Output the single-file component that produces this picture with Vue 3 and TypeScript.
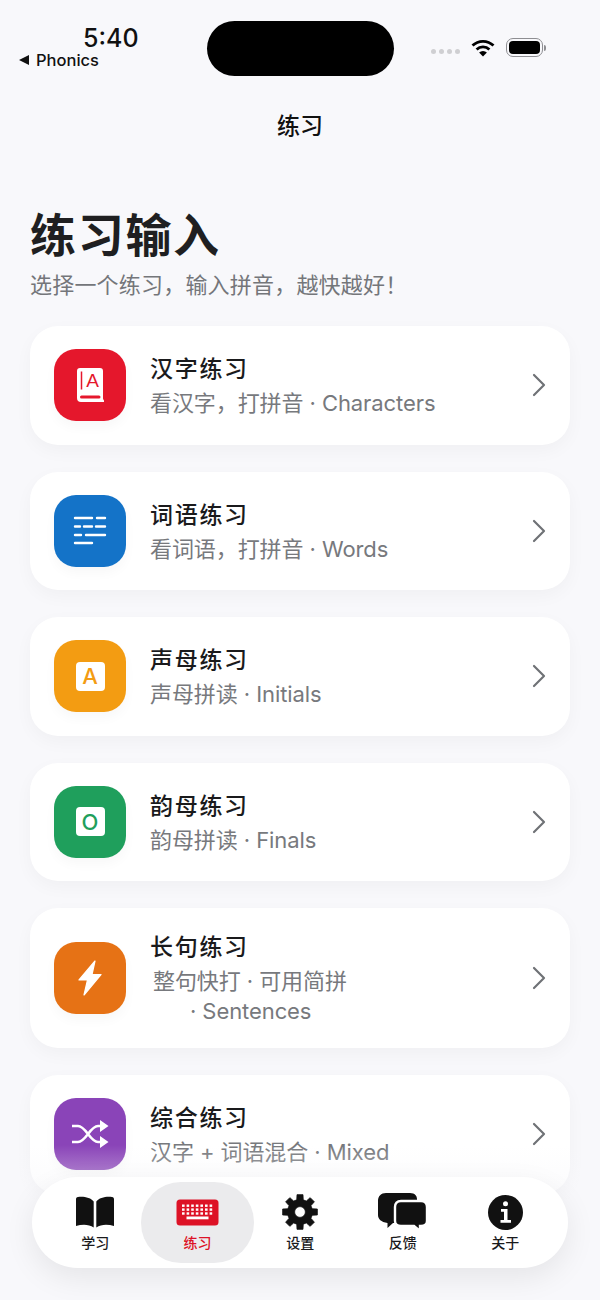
<script setup lang="ts">
interface Exercise {
  title: string
  sub: string
  sub2?: string
  color: string
  icon: 'book' | 'lines' | 'a' | 'o' | 'bolt' | 'shuffle'
}

const exercises: Exercise[] = [
  { title: '汉字练习', sub: '看汉字，打拼音 · Characters', color: '#e5172c', icon: 'book' },
  { title: '词语练习', sub: '看词语，打拼音 · Words', color: '#1473c8', icon: 'lines' },
  { title: '声母练习', sub: '声母拼读 · Initials', color: '#f39c12', icon: 'a' },
  { title: '韵母练习', sub: '韵母拼读 · Finals', color: '#1f9f5c', icon: 'o' },
  { title: '长句练习', sub: '整句快打 · 可用简拼', sub2: '· Sentences', color: '#e67215', icon: 'bolt' },
  { title: '综合练习', sub: '汉字 + 词语混合 · Mixed', color: '#8a44b8', icon: 'shuffle' },
]

const tabs = [
  { label: '学习', icon: 'read' },
  { label: '练习', icon: 'keyboard' },
  { label: '设置', icon: 'gear' },
  { label: '反馈', icon: 'chat' },
  { label: '关于', icon: 'info' },
]

// gear outline: 8 teeth around a hub
const gearPath = (() => {
  const cx = 18
  const cy = 18
  const pts: string[] = []
  for (let i = 0; i < 8; i++) {
    const a = (i * Math.PI) / 4 - Math.PI / 2
    const p = (r: number, d: number) =>
      `${(cx + r * Math.cos(a + d)).toFixed(2)} ${(cy + r * Math.sin(a + d)).toFixed(2)}`
    pts.push(`${i === 0 ? 'M' : 'L'}${p(12.6, -0.26)}`, `L${p(17.6, -0.17)}`, `L${p(17.6, 0.17)}`, `L${p(12.6, 0.26)}`)
  }
  return pts.join(' ') + ' Z M18 12.6 A5.4 5.4 0 1 0 18 23.4 A5.4 5.4 0 1 0 18 12.6 Z'
})()
</script>

<template>
  <div class="page">
    <header class="status">
      <div class="status-left">
        <span class="time">5:40</span>
        <span class="back"><i class="back-arrow" />Phonics</span>
      </div>
      <div class="island" />
      <div class="status-right">
        <span class="dots"><i /><i /><i /><i /></span>
        <svg class="wifi" width="24" height="18" viewBox="0 0 24 18">
          <path d="M1.500 6.600a15 15 0 0 1 21 0" fill="none" stroke="#000" stroke-width="2.800" />
          <path d="M5.600 10.400a9.200 9.200 0 0 1 12.800 0" fill="none" stroke="#000" stroke-width="2.800" />
          <path d="M12 17.600l-3.900-4a5.400 5.400 0 0 1 7.800 0z" fill="#000" />
        </svg>
        <span class="battery"><span class="battery-fill" /></span>
        <i class="battery-cap" />
      </div>
    </header>

    <div class="nav-title">练习</div>

    <main class="content">
      <h1>练习输入</h1>
      <p class="lead">选择一个练习，输入拼音，越快越好！</p>

      <section class="list">
        <article v-for="item in exercises" :key="item.title" class="card">
          <div class="icon" :style="{ background: item.color }">
            <svg v-if="item.icon === 'book'" width="27" height="35" viewBox="0 0 27 35">
              <path d="M3 0h20a3 3 0 0 1 3 3v27.500c0 .8.500 1.500 1 2V34H4a4 4 0 0 1-4-4V3a3 3 0 0 1 3-3z" fill="#fff" />
              <path d="M4.500 3.500v18" stroke="#e5172c" stroke-width="1.500" />
              <rect x="3" y="27.500" width="20.500" height="3" rx="1.500" fill="#e5172c" />
              <text x="15.500" y="19" class="glyph-book">A</text>
            </svg>
            <svg v-else-if="item.icon === 'lines'" width="34" height="29" viewBox="0 0 34 29" stroke="#fff" stroke-width="2.400" stroke-linecap="round">
              <path d="M2 2h17M24 2h8M2 10.500h5M11 10.500h8M23 10.500h9M2 19h6M13 19h19M2 27h17" />
            </svg>
            <span v-else-if="item.icon === 'a'" class="letter" style="color: #f39c12">A</span>
            <span v-else-if="item.icon === 'o'" class="letter" style="color: #1f9f5c">O</span>
            <svg v-else-if="item.icon === 'bolt'" width="24" height="36" viewBox="0 0 24 36">
              <path d="M17 1L1 20h8.500L6 35l17-20.500h-9z" fill="#fff" stroke="#fff" stroke-width="1.200" stroke-linejoin="round" />
            </svg>
            <svg v-else width="38" height="28" viewBox="0 0 38 28" fill="none" stroke="#fff" stroke-width="2.600">
              <path d="M1 6h6c8 0 12 16 20 16h3M1 22h6c8 0 12-16 20-16h3" />
              <path d="M29 0l8.500 6L29 12zM29 16l8.500 6L29 28z" fill="#fff" stroke="none" />
            </svg>
          </div>
          <div class="text">
            <h2>{{ item.title }}</h2>
            <p v-if="!item.sub2" class="sub">{{ item.sub }}</p>
            <p v-else class="sub wrapped">{{ item.sub }}<span>{{ item.sub2 }}</span></p>
          </div>
          <svg class="chev" width="14" height="24" viewBox="0 0 14 24" fill="none" stroke="#6f7276" stroke-width="2.200" stroke-linecap="round" stroke-linejoin="round">
            <path d="M2 2l10 10L2 22" />
          </svg>
        </article>
      </section>
    </main>

    <div class="tab-fade" />
    <nav class="tabbar">
      <div v-for="tab in tabs" :key="tab.label" class="tab" :class="{ active: tab.icon === 'keyboard' }">
        <div class="tab-icon">
          <svg v-if="tab.icon === 'read'" width="40" height="32" viewBox="0 0 40 32" fill="#111">
            <path d="M18.700 5.500C16 1.500 8 0 3 1 1.500 1.300 1 2 1 3.500V30c6-2 13-2 17.700 1.500z" />
            <path d="M21.300 5.500C24 1.500 32 0 37 1c1.500.3 2 1 2 2.500V30c-6-2-13-2-17.700 1.500z" />
          </svg>
          <svg v-else-if="tab.icon === 'keyboard'" width="43" height="27" viewBox="0 0 43 27">
            <rect x="0.500" y="0.500" width="42" height="26" rx="3.500" fill="#dd1226" />
            <g fill="#fff">
              <rect v-for="n in 21" :key="n" :x="6 + ((n - 1) % 7) * 4.600" :y="5.500 + Math.floor((n - 1) / 7) * 3.900" width="2.600" height="2.400" />
            </g>
            <rect x="10.500" y="17.500" width="22" height="2.800" fill="#fff" />
          </svg>
          <svg v-else-if="tab.icon === 'gear'" width="36" height="36" viewBox="0 0 36 36">
            <path :d="gearPath" fill="#111" fill-rule="evenodd" stroke="#111" stroke-width="0.800" stroke-linejoin="round" />
          </svg>
          <svg v-else-if="tab.icon === 'chat'" width="50" height="38" viewBox="0 0 50 38">
            <path d="M8 0h24c5 0 7 3 7 6v18c0 4-3 6-7 6H15l-5.500 5v-5C3 29 0 26 0 22V8c0-5 3-8 8-8z" fill="#111" />
            <path d="M23 8h20c4 0 6 2 6 6v14c0 3-2 5-6 5h-1v5l-6-5H23c-4 0-6-2-6-5V14c0-4 2-6 6-6z" fill="#111" stroke="#fff" stroke-width="2.400" />
          </svg>
          <svg v-else width="35" height="35" viewBox="0 0 35 35">
            <circle cx="17.500" cy="17.500" r="17.500" fill="#111" />
            <circle cx="17.500" cy="8.800" r="2.500" fill="#fff" />
            <path d="M13 14h6.500v11H23v2.800H12.500V25H16v-8.200h-3z" fill="#fff" />
          </svg>
        </div>
        <span class="tab-label">{{ tab.label }}</span>
      </div>
    </nav>
  </div>
</template>

<style>
html,
body {
  margin: 0;
  background: #f8f8fb;
}
</style>

<style scoped>
.page {
  position: relative;
  width: 600px;
  height: 1300px;
  overflow: hidden;
  background: #f8f8fb;
  color: #1a1a1c;
  font-family: Inter, "Noto Sans CJK SC", sans-serif;
}
.status {
  display: flex;
  align-items: flex-start;
  height: 100px;
  padding: 21px 0 0 19px;
  box-sizing: border-box;
}
.status-left {
  width: 188px;
  display: flex;
  flex-direction: column;
}
.time {
  margin: 3px 0 0 64px;
  font-size: 25px;
  line-height: 28px;
  font-weight: 500;
  color: #111;
}
.back {
  display: flex;
  align-items: center;
  font-size: 16.500px;
  line-height: 20px;
  margin-top: -2px;
  font-weight: 500;
  color: #111;
}
.back-arrow {
  width: 0;
  height: 0;
  margin-right: 7px;
  border-top: 5.500px solid transparent;
  border-bottom: 5.500px solid transparent;
  border-right: 10px solid #111;
}
.island {
  width: 187px;
  height: 55px;
  border-radius: 28px;
  background: #000;
}
.status-right {
  display: flex;
  align-items: center;
  margin: 17px 0 0 37px;
}
.dots {
  display: flex;
  gap: 3px;
  margin-top: 8px;
  margin-right: 11px;
}
.dots i {
  width: 5px;
  height: 5px;
  border-radius: 50%;
  background: #cfcfd2;
}
.wifi {
  margin-right: 11px;
}
.battery {
  display: block;
  width: 37px;
  height: 19px;
  padding: 2px;
  box-sizing: border-box;
  border: 1.500px solid #8e8e92;
  border-radius: 7px;
}
.battery-fill {
  display: block;
  height: 100%;
  border-radius: 4px;
  background: #000;
}
.battery-cap {
  width: 2px;
  height: 6px;
  margin-left: 1px;
  border-radius: 0 2px 2px 0;
  background: #8e8e92;
}
.nav-title {
  margin-top: 10px;
  height: 32px;
  line-height: 32px;
  text-align: center;
  font-size: 23px;
  font-weight: 500;
  color: #111;
}
.content {
  padding: 0 30px;
}
h1 {
  margin: 63px 0 0;
  font-size: 46px;
  line-height: 60px;
  font-weight: 700;
  letter-spacing: 1.700px;
  color: #1f1f21;
}
.lead {
  margin: 4px 0 0;
  font-size: 22px;
  line-height: 32px;
  letter-spacing: 0.200px;
  color: #74767a;
}
.list {
  margin-top: 25px;
  display: flex;
  flex-direction: column;
  gap: 27px;
}
.card {
  display: flex;
  align-items: center;
  min-height: 118.500px;
  padding: 0 24px;
  box-sizing: border-box;
  border-radius: 28px;
  background: #fff;
  box-shadow: 0 6px 18px rgba(0, 0, 0, 0.035);
}
.card:nth-child(5) {
  min-height: 140px;
}
.icon {
  flex-shrink: 0;
  width: 72px;
  height: 72px;
  margin-right: 24px;
  display: flex;
  align-items: center;
  justify-content: center;
  border-radius: 22px;
  box-shadow: 0 6px 12px rgba(0, 0, 0, 0.03);
}
.glyph-book {
  font-family: "Liberation Sans", sans-serif;
  font-size: 19px;
  fill: #e5172c;
  text-anchor: middle;
}
.letter {
  width: 29px;
  height: 29px;
  display: flex;
  align-items: center;
  justify-content: center;
  border-radius: 4px;
  background: #fff;
  font-size: 22px;
  font-weight: 500;
}
.text {
  flex: 1;
  min-width: 0;
  padding-top: 1px;
}
h2 {
  margin: 0;
  font-size: 23px;
  line-height: 32px;
  font-weight: 500;
  letter-spacing: 1.700px;
  color: #1a1a1c;
}
.sub {
  margin: 3px 0 0;
  font-size: 22px;
  line-height: 30px;
  letter-spacing: -0.080px;
  color: #77797d;
}
.sub.wrapped {
  padding-left: 3px;
  line-height: 30px;
}
.sub.wrapped span {
  display: block;
  padding-left: 37px;
}
.chev {
  flex-shrink: 0;
}
.tab-fade {
  position: absolute;
  left: 0;
  right: 0;
  top: 1145px;
  height: 55px;
  background: linear-gradient(180deg, rgba(248, 248, 251, 0) 0%, rgba(248, 248, 251, 0.6) 100%);
}
.tab-fade::after {
  content: "";
  position: absolute;
  left: 0;
  right: 0;
  top: 55px;
  height: 100px;
  background: #f8f8fb;
}
.tabbar {
  position: absolute;
  left: 32px;
  top: 1177px;
  width: 536px;
  height: 91px;
  padding: 5px 12px;
  box-sizing: border-box;
  display: grid;
  grid-template-columns: repeat(5, 102.500px);
  border-radius: 46px;
  background: #fff;
  box-shadow: 0 10px 30px rgba(0, 0, 0, 0.08);
}
.tab {
  display: flex;
  flex-direction: column;
  align-items: center;
  padding-top: 10px;
  gap: 2px;
  border-radius: 40px;
}
.tab.active {
  margin: 0 -5px 0 -5.500px;
  background: #ebebed;
}
.tab-icon {
  height: 40px;
  display: flex;
  align-items: center;
}
.tab-label {
  font-size: 14px;
  line-height: 18px;
  font-weight: 500;
  color: #1a1a1c;
}
.tab.active .tab-label {
  color: #dd1226;
}
</style>
